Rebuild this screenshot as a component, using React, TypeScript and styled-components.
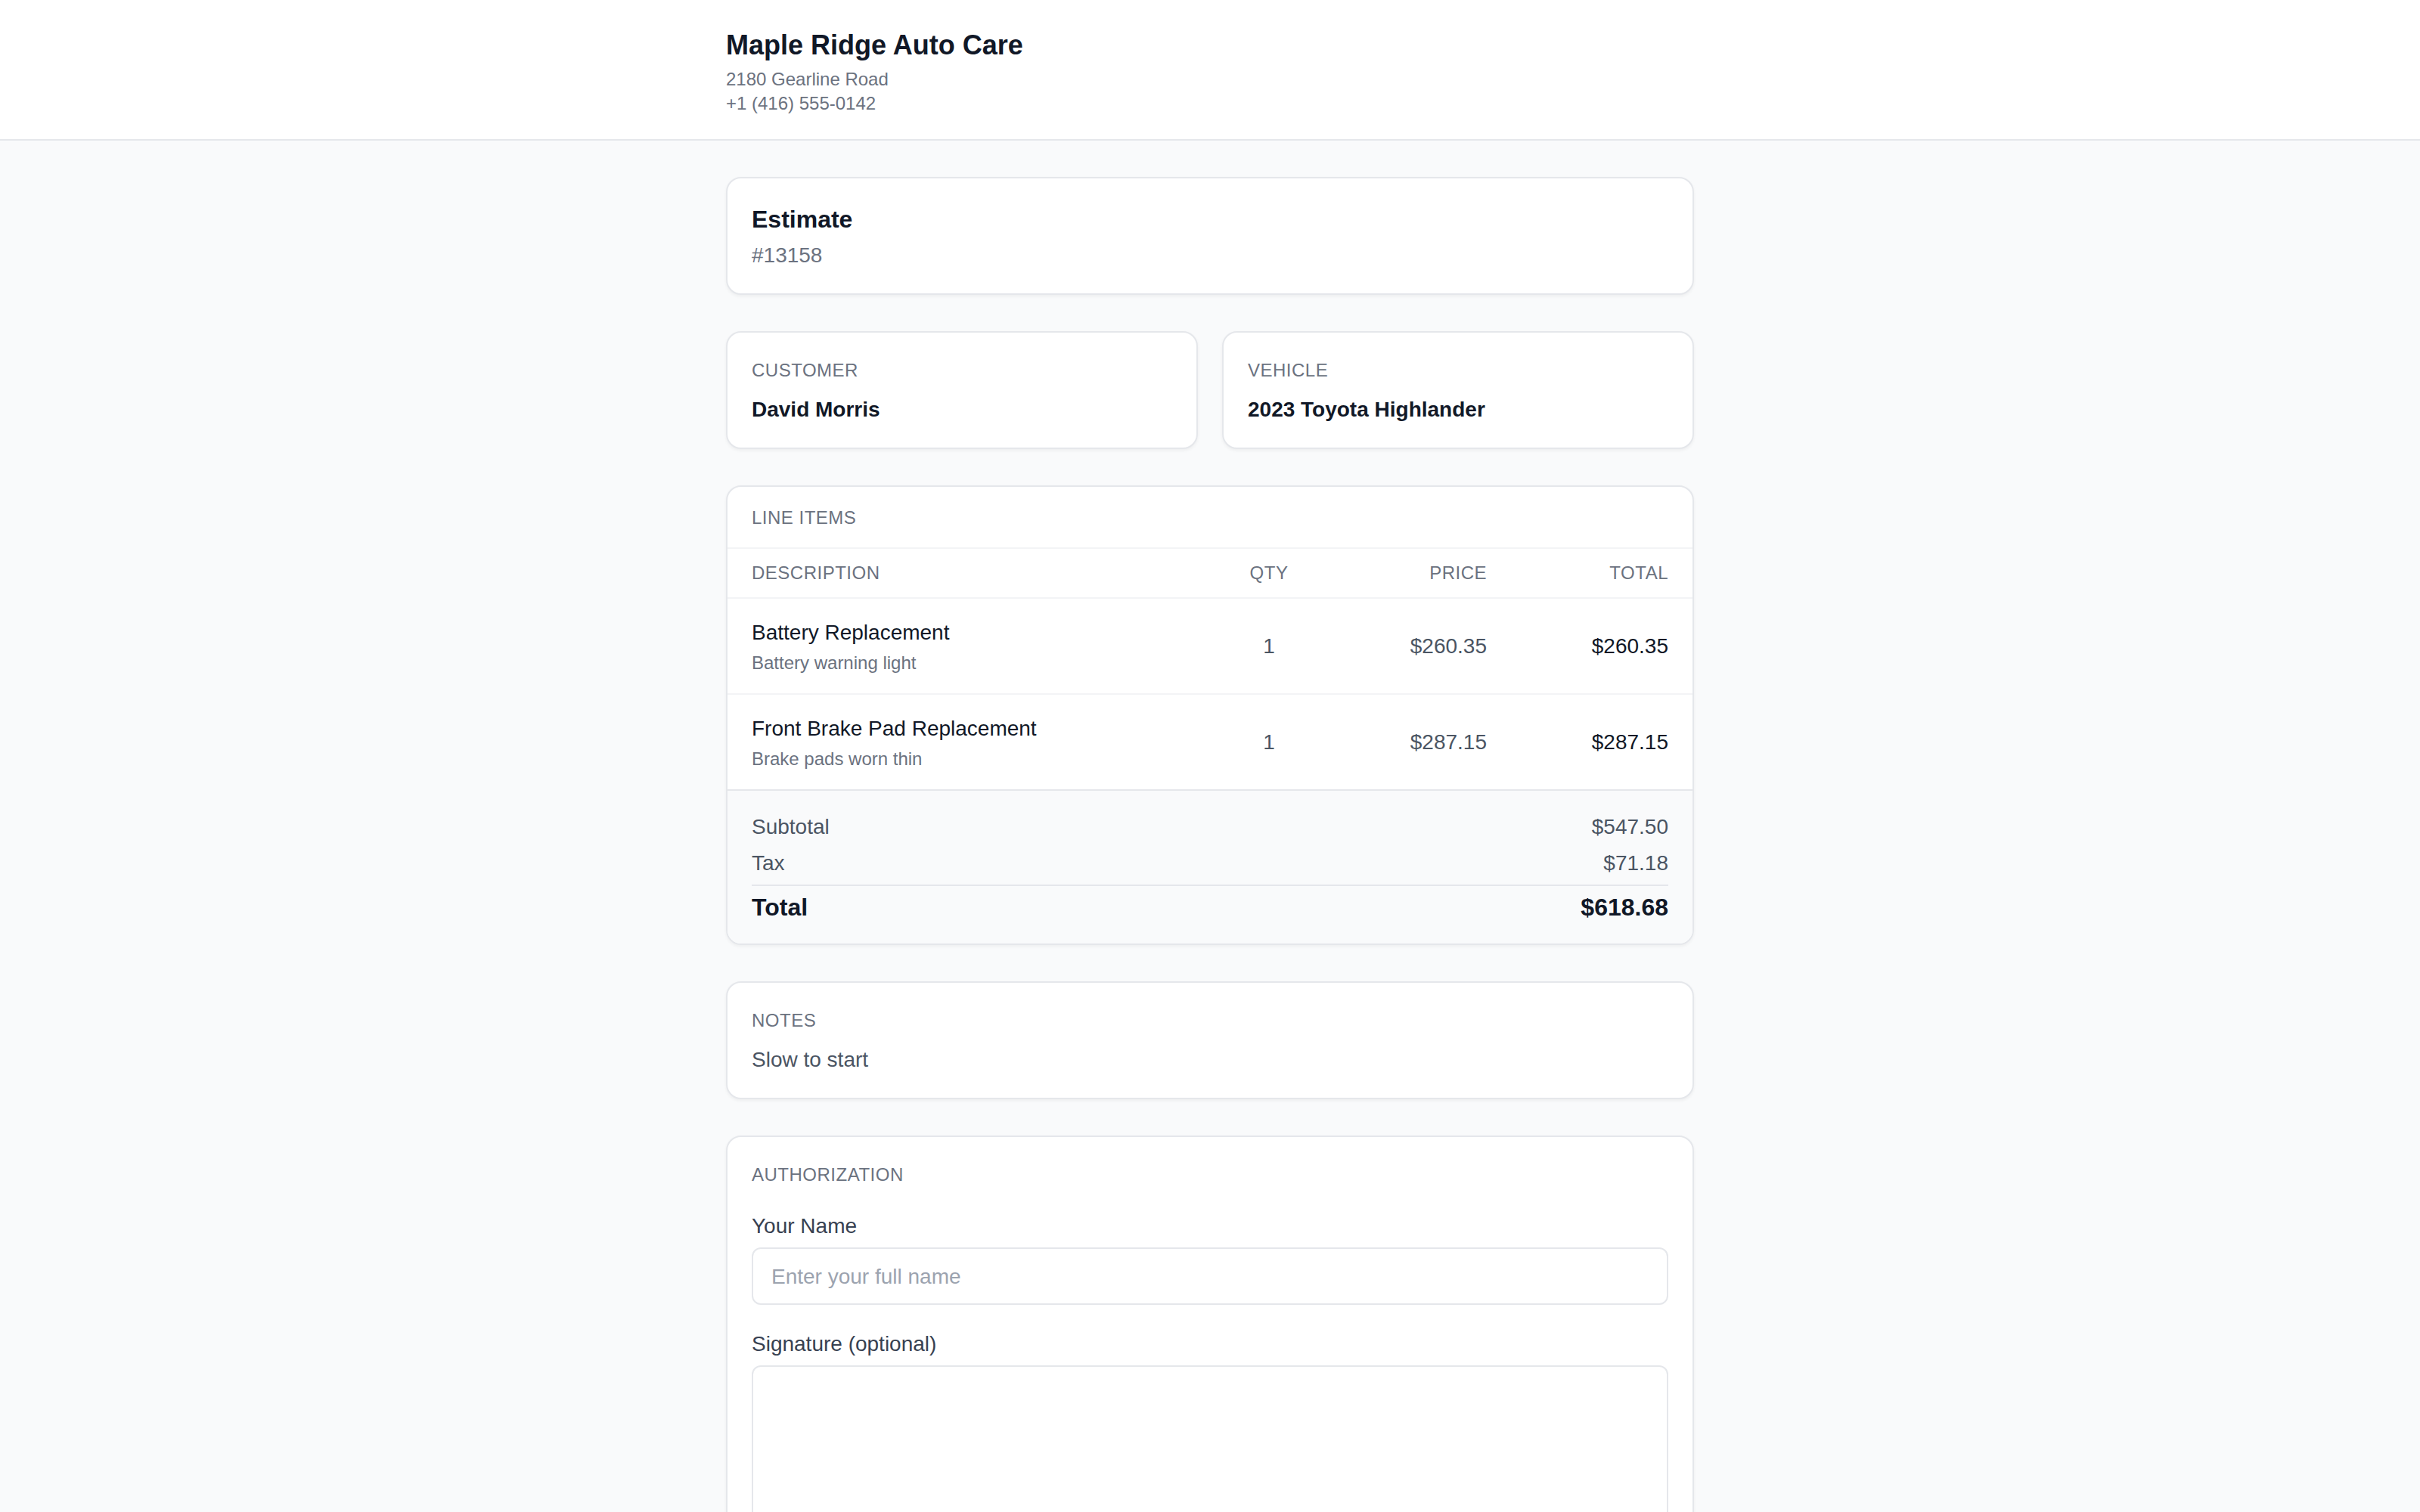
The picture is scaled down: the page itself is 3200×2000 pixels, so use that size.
import React from "react";
import styled, { createGlobalStyle } from "styled-components";

const GlobalStyle = createGlobalStyle`
  * { box-sizing: border-box; }
  html, body { margin: 0; padding: 0; }
  body {
    background: #f9fafb;
    font-family: "Liberation Sans", Arial, Helvetica, sans-serif;
    color: #111827;
  }
`;

const Header = styled.header`
  background: #ffffff;
  border-bottom: 2px solid #e5e7eb;
`;

const HeaderInner = styled.div`
  max-width: 1280px;
  margin: 0 auto;
  padding: 33px 0 31px;
`;

const ShopName = styled.h1`
  margin: 0;
  font-size: 36px;
  line-height: 54px;
  font-weight: 700;
  color: #111827;
`;

const ShopLine = styled.div<{ $first?: boolean }>`
  font-size: 24px;
  line-height: 32px;
  color: #6b7280;
  margin-top: ${(p) => (p.$first ? "2px" : "0")};
`;

const Main = styled.main`
  max-width: 1280px;
  margin: 0 auto;
  padding: 48px 0;
  display: flex;
  flex-direction: column;
  gap: 48px;
`;

const Card = styled.section<{ $flush?: boolean }>`
  background: #ffffff;
  border: 2px solid #e5e7eb;
  border-radius: 20px;
  box-shadow: 0 2px 4px rgba(0, 0, 0, 0.05);
  padding: ${(p) => (p.$flush ? "0" : "34px 32px 30px")};
  overflow: hidden;
`;

const CardTitle = styled.h2`
  margin: 0;
  font-size: 32px;
  line-height: 40px;
  font-weight: 700;
  color: #111827;
`;

const EstimateNumber = styled.div`
  margin-top: 8px;
  font-size: 28px;
  line-height: 40px;
  color: #6b7280;
`;

const InfoGrid = styled.div`
  display: grid;
  grid-template-columns: 1fr 1fr;
  gap: 32px;
`;

const Label = styled.div<{ $gap?: number }>`
  font-size: 24px;
  line-height: 32px;
  letter-spacing: 0.5px;
  text-transform: uppercase;
  color: #6b7280;
  margin-bottom: ${(p) => (p.$gap ?? 16)}px;
`;

const Value = styled.div<{ $bold?: boolean }>`
  font-size: 28px;
  line-height: 40px;
  font-weight: ${(p) => (p.$bold ? 700 : 400)};
  color: ${(p) => (p.$bold ? "#111827" : "#4b5563")};
`;

const SectionHead = styled.div`
  padding: 25px 32px 23px;
  border-bottom: 2px solid #f3f4f6;
`;

const SectionLabel = styled.div`
  font-size: 24px;
  line-height: 32px;
  letter-spacing: 0.5px;
  text-transform: uppercase;
  color: #6b7280;
`;

const TableRow = styled.div<{ $head?: boolean; $last?: boolean }>`
  display: grid;
  grid-template-columns: 1fr 96px 240px 240px;
  align-items: center;
  padding: ${(p) => (p.$head ? "16px 32px" : "25px 32px 24px")};
  border-bottom: ${(p) => (p.$last ? "none" : "2px solid #f3f4f6")};
`;

const HeadCell = styled.div<{ $align?: "left" | "center" | "right" }>`
  font-size: 24px;
  line-height: 32px;
  letter-spacing: 0.5px;
  text-transform: uppercase;
  color: #6b7280;
  text-align: ${(p) => p.$align ?? "left"};
`;

const ItemTitle = styled.div`
  font-size: 28px;
  line-height: 40px;
  color: #111827;
`;

const ItemNote = styled.div`
  margin-top: 4px;
  font-size: 24px;
  line-height: 32px;
  color: #6b7280;
`;

const NumCell = styled.div<{ $align?: "center" | "right"; $strong?: boolean }>`
  font-size: 28px;
  line-height: 40px;
  text-align: ${(p) => p.$align ?? "right"};
  color: ${(p) => (p.$strong ? "#111827" : "#4b5563")};
`;

const Totals = styled.div`
  background: #f9fafb;
  border-top: 2px solid #e5e7eb;
  padding: 28px 32px 24px;
  display: flex;
  flex-direction: column;
  gap: 8px;
`;

const TotalLine = styled.div`
  display: flex;
  justify-content: space-between;
  font-size: 28px;
  line-height: 40px;
  color: #4b5563;
`;

const GrandLine = styled.div`
  display: flex;
  justify-content: space-between;
  border-top: 2px solid #e5e7eb;
  padding-top: 4px;
  font-size: 32px;
  line-height: 48px;
  font-weight: 700;
  color: #111827;
`;

const Form = styled.div`
  display: flex;
  flex-direction: column;
  gap: 32px;
`;

const Field = styled.label`
  display: flex;
  flex-direction: column;
  gap: 8px;
`;

const FieldLabel = styled.span`
  font-size: 28px;
  line-height: 40px;
  color: #374151;
`;

const TextInput = styled.input`
  width: 100%;
  font-family: inherit;
  font-size: 28px;
  line-height: 40px;
  padding: 17px 24px 15px;
  border: 2px solid #e5e7eb;
  border-radius: 12px;
  color: #111827;
  background: #ffffff;
  outline: none;
  &::placeholder { color: #9ca3af; }
`;

const SignaturePad = styled.div`
  width: 100%;
  height: 320px;
  border: 2px solid #e5e7eb;
  border-radius: 12px;
  background: #ffffff;
`;

const items = [
  { title: "Battery Replacement", note: "Battery warning light", qty: 1, price: "$260.35", total: "$260.35" },
  { title: "Front Brake Pad Replacement", note: "Brake pads worn thin", qty: 1, price: "$287.15", total: "$287.15" },
];

export default function App() {
  return (
    <>
      <GlobalStyle />
      <Header>
        <HeaderInner>
          <ShopName>Maple Ridge Auto Care</ShopName>
          <ShopLine $first>2180 Gearline Road</ShopLine>
          <ShopLine>+1 (416) 555-0142</ShopLine>
        </HeaderInner>
      </Header>
      <Main>
        <Card>
          <CardTitle>Estimate</CardTitle>
          <EstimateNumber>#13158</EstimateNumber>
        </Card>

        <InfoGrid>
          <Card>
            <Label>Customer</Label>
            <Value $bold>David Morris</Value>
          </Card>
          <Card>
            <Label>Vehicle</Label>
            <Value $bold>2023 Toyota Highlander</Value>
          </Card>
        </InfoGrid>

        <Card $flush>
          <SectionHead>
            <SectionLabel>Line Items</SectionLabel>
          </SectionHead>
          <TableRow $head>
            <HeadCell>Description</HeadCell>
            <HeadCell $align="center">Qty</HeadCell>
            <HeadCell $align="right">Price</HeadCell>
            <HeadCell $align="right">Total</HeadCell>
          </TableRow>
          {items.map((it, i) => (
            <TableRow key={it.title} $last={i === items.length - 1}>
              <div>
                <ItemTitle>{it.title}</ItemTitle>
                <ItemNote>{it.note}</ItemNote>
              </div>
              <NumCell $align="center">{it.qty}</NumCell>
              <NumCell>{it.price}</NumCell>
              <NumCell $strong>{it.total}</NumCell>
            </TableRow>
          ))}
          <Totals>
            <TotalLine>
              <span>Subtotal</span>
              <span>$547.50</span>
            </TotalLine>
            <TotalLine>
              <span>Tax</span>
              <span>$71.18</span>
            </TotalLine>
            <GrandLine>
              <span>Total</span>
              <span>$618.68</span>
            </GrandLine>
          </Totals>
        </Card>

        <Card>
          <Label>Notes</Label>
          <Value>Slow to start</Value>
        </Card>

        <Card>
          <Label $gap={32}>Authorization</Label>
          <Form>
            <Field>
              <FieldLabel>Your Name</FieldLabel>
              <TextInput placeholder="Enter your full name" />
            </Field>
            <Field>
              <FieldLabel>Signature (optional)</FieldLabel>
              <SignaturePad />
            </Field>
          </Form>
        </Card>
      </Main>
    </>
  );
}
